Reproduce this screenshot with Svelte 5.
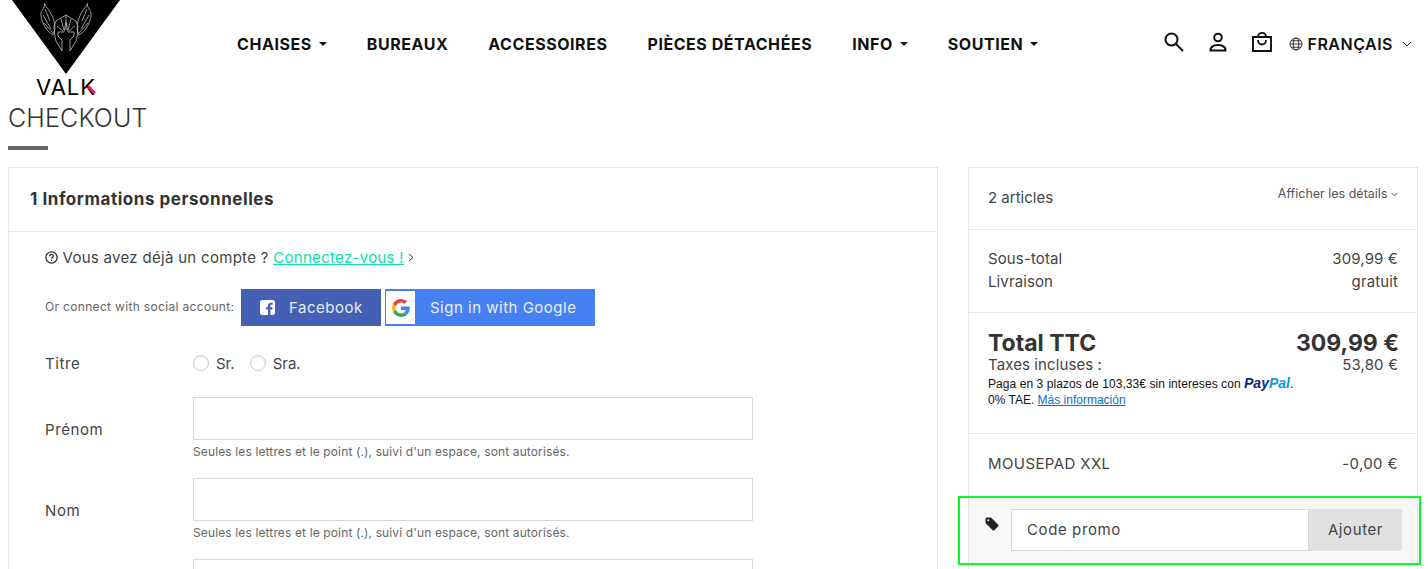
<script>
  const nav = [
    { label: 'CHAISES', caret: true },
    { label: 'BUREAUX' },
    { label: 'ACCESSOIRES' },
    { label: 'PIÈCES DÉTACHÉES' },
    { label: 'INFO', caret: true },
    { label: 'SOUTIEN', caret: true }
  ]
</script>

<div class="page">
  <header>
    <div class="logo">
      <svg width="108" height="74" viewBox="0 0 108 74">
        <path d="M0 0H108L54 74Z" fill="#000" />
        <g fill="none" stroke="#bdbdbd" stroke-width="0.8">
          <!-- wings -->
          <path d="M32.500 3.500C33.500 7 30 9 29 13C28.500 17 30 20 31 23C33 28 36 32 41 35L43 29C43 22 41 17 38 12C36.500 9 34 7 32.500 3.500Z" />
          <path d="M33 9L38 21M31 15L39 29M32 23L41 33" />
          <path d="M75.500 3.500C74.500 7 78 9 79 13C79.500 17 78 20 77 23C75 28 72 32 67 35L65 29C65 22 67 17 70 12C71.500 9 74 7 75.500 3.500Z" />
          <path d="M75 9L70 21M77 15L69 29M76 23L67 33" />
          <!-- helmet -->
          <path d="M54 15L44 21L42 26L43 37L44 41L50 51V40L46 36V32H52L54 22L56 32H62V36L58 40V51L64 41L65 37L66 26L64 21Z" />
          <path d="M45 26L51 31M63 26L57 31M49 19L52 30M59 19L56 30M54 15V30" />
        </g>
      </svg>
      <div class="brand">VAL<span class="k">K</span></div>
    </div>

    <nav>
      {#each nav as item}
        <a href="#top">{item.label}{#if item.caret}<i class="caret"></i>{/if}</a>
      {/each}
    </nav>

    <div class="tools">
      <svg class="tool" width="24" height="24" viewBox="0 0 24 24" fill="none" stroke="#111" stroke-width="2">
        <circle cx="9.500" cy="9.500" r="6" />
        <path d="M14 14L21 21" />
      </svg>
      <svg class="tool" width="24" height="24" viewBox="0 0 24 24" fill="none" stroke="#111" stroke-width="2">
        <circle cx="12" cy="7.500" r="3.800" />
        <path d="M4.500 20.500C4.500 16.500 8 15 12 15S19.500 16.500 19.500 20.500Z" />
      </svg>
      <svg class="tool" width="24" height="24" viewBox="0 0 24 24" fill="none" stroke="#111" stroke-width="1.900">
        <path d="M3 7H21V21H3Z" />
        <path d="M8 7C8 1.500 16 1.500 16 7M8 10C8 16 16 16 16 10" />
      </svg>
      <div class="lang">
        <svg width="14" height="14" viewBox="0 0 14 14" fill="none" stroke="#222" stroke-width="0.9">
          <circle cx="7" cy="7" r="6" />
          <ellipse cx="7" cy="7" rx="2.800" ry="6" />
          <path d="M1 7H13M2 3.800H12M2 10.200H12" />
        </svg>
        <span>FRANÇAIS</span>
        <svg class="chev" width="10" height="6" viewBox="0 0 10 6" fill="none" stroke="#222" stroke-width="1">
          <path d="M1 1L5 5L9 1" />
        </svg>
      </div>
    </div>
  </header>

  <h1>CHECKOUT</h1>
  <div class="rule"></div>

  <div class="columns">
    <section class="card left">
      <h2>1 Informations personnelles</h2>
      <div class="form">
        <p class="login">
          <svg width="13" height="13" viewBox="0 0 13 13" fill="none" stroke="#333" stroke-width="1.300">
            <circle cx="6.500" cy="6.500" r="5.600" />
            <path d="M4.600 5.200C4.600 2.800 8.400 2.800 8.400 5C8.400 6.400 6.500 6.300 6.500 7.800M6.500 8.800V10" />
          </svg>
          Vous avez déjà un compte ? <a href="#top">Connectez-vous !</a>
          <svg class="next" width="6" height="9" viewBox="0 0 6 9" fill="none" stroke="#333" stroke-width="1">
            <path d="M1 1L5 4.500L1 8" />
          </svg>
        </p>

        <div class="social">
          <span class="social-label">Or connect with social account:</span>
          <button class="fb">
            <svg width="15" height="15" viewBox="0 0 15 15">
              <path fill="#fff" fill-rule="evenodd" d="M2.500 0H12.500A2.500 2.500 0 0 1 15 2.500V12.500A2.500 2.500 0 0 1 12.500 15H10.400V9.400H12.300L12.600 7.200H10.400V5.900C10.400 5.200 10.700 4.800 11.500 4.800H12.700V2.800C12.400 2.800 11.700 2.700 11 2.700C9.200 2.700 8 3.800 8 5.700V7.200H6V9.400H8V15H2.500A2.500 2.500 0 0 1 0 12.500V2.500A2.500 2.500 0 0 1 2.500 0Z" />
            </svg>
            Facebook
          </button>
          <button class="google">
            <span class="g-box">
              <svg width="18" height="18" viewBox="0 0 48 48">
                <path fill="#EA4335" d="M24 9.500c3.500 0 6.700 1.200 9.200 3.600l6.900-6.900C35.900 2.400 30.500 0 24 0 14.600 0 6.500 5.400 2.600 13.200l8 6.200C12.500 13.700 17.800 9.500 24 9.500z" />
                <path fill="#4285F4" d="M47 24.500c0-1.600-.1-3.100-.4-4.500H24v9h12.900c-.6 3-2.200 5.500-4.700 7.200l7.700 6C44.400 38.100 47 31.900 47 24.500z" />
                <path fill="#FBBC05" d="M10.500 28.600c-.5-1.400-.8-3-.8-4.600s.3-3.200.8-4.600l-8-6.200C.9 16.500 0 20.100 0 24s.9 7.500 2.600 10.800l7.900-6.200z" />
                <path fill="#34A853" d="M24 48c6.500 0 11.900-2.100 15.900-5.800l-7.700-6c-2.200 1.500-4.900 2.300-8.200 2.300-6.200 0-11.500-4.200-13.400-9.900l-8 6.200C6.500 42.600 14.600 48 24 48z" />
              </svg>
            </span>
            <span class="g-label">Sign in with Google</span>
          </button>
        </div>

        <div class="row title-row">
          <span class="field-label">Titre</span>
          <div class="radios">
            <i class="radio"></i><span>Sr.</span>
            <i class="radio"></i><span>Sra.</span>
          </div>
        </div>

        <div class="row">
          <span class="field-label">Prénom</span>
          <div class="field">
            <input type="text" />
            <small>Seules les lettres et le point (.), suivi d'un espace, sont autorisés.</small>
          </div>
        </div>

        <div class="row">
          <span class="field-label">Nom</span>
          <div class="field">
            <input type="text" />
            <small>Seules les lettres et le point (.), suivi d'un espace, sont autorisés.</small>
          </div>
        </div>

        <div class="row">
          <span class="field-label"></span>
          <div class="field"><input type="text" /></div>
        </div>
      </div>
    </section>

    <aside class="card right">
      <div class="block count">
        <span>2 articles</span>
        <span class="details">Afficher les détails
          <svg width="7" height="5" viewBox="0 0 7 5" fill="none" stroke="#555" stroke-width="1"><path d="M.5.8L3.500 4L6.500.8" /></svg>
        </span>
      </div>

      <div class="block subtotals">
        <div class="line"><span>Sous-total</span><span>309,99 €</span></div>
        <div class="line"><span>Livraison</span><span>gratuit</span></div>
      </div>

      <div class="block total">
        <div class="line big"><span>Total TTC</span><span>309,99 €</span></div>
        <div class="line taxes"><span>Taxes incluses :</span><span>53,80 €</span></div>
        <p class="paypal">
          <span class="wide">Paga en 3 plazos de 103,33€ sin intereses con</span> <b class="pp"><span>Pay</span><span>Pal</span></b>.<br />
          0% TAE. <a href="#top">Más información</a>
        </p>
      </div>

      <div class="block voucher">
        <div class="line"><span>MOUSEPAD XXL</span><span>-0,00 €</span></div>
      </div>

      <div class="promo">
        <svg class="tag" width="14" height="14" viewBox="0 0 14 14">
          <path fill="#222" fill-rule="evenodd" d="M0.500 1.500L1.500.5H6L13.200 7.700C13.700 8.200 13.700 8.800 13.200 9.300L9.300 13.200C8.800 13.700 8.200 13.700 7.700 13.200L.5 6ZM3.300 2.300A1 1 0 1 0 3.300 4.300A1 1 0 1 0 3.300 2.300Z" />
        </svg>
        <div class="promo-input">Code promo</div>
        <button class="promo-btn">Ajouter</button>
        <div class="highlight"></div>
      </div>
    </aside>
  </div>
</div>

<style>
  :global(html), :global(body) {
    margin: 0;
    overflow: hidden;
    background: #fff;
  }

  .page {
    width: 1428px;
    height: 569px;
    overflow: hidden;
    font-family: "Inter", "Noto Sans", sans-serif;
    color: #444;
    box-sizing: border-box;
  }

  header {
    display: flex;
    height: 100px;
    padding-left: 12px;
    box-sizing: border-box;
  }

  .logo {
    width: 108px;
    display: flex;
    flex-direction: column;
    align-items: center;
  }

  .logo svg {
    display: block;
  }

  .brand {
    font-size: 22px;
    line-height: 22px;
    margin-top: 2px;
    font-weight: 400;
    color: #000;
    letter-spacing: 1px;
  }

  .k {
    position: relative;
    display: inline-block;
  }

  .k::after {
    content: '';
    position: absolute;
    right: 3px;
    bottom: 3px;
    width: 3px;
    height: 10px;
    background: #ec1274;
    transform: rotate(-40deg);
  }

  nav {
    display: flex;
    gap: 40px;
    margin-left: 117px;
    padding-top: 34px;
    height: 20px;
  }

  nav a {
    font-size: 16px;
    line-height: 20px;
    font-weight: 700;
    letter-spacing: 0.55px;
    color: #111;
    text-decoration: none;
    white-space: nowrap;
    display: flex;
    align-items: center;
  }

  .caret {
    display: block;
    width: 0;
    height: 0;
    margin-left: 7px;
    border: 4px solid transparent;
    border-top-color: #111;
    border-bottom-width: 0;
  }

  .tools {
    display: flex;
    align-items: flex-start;
    margin-left: auto;
    padding-top: 30px;
    padding-right: 16px;
    gap: 20px;
  }

  .tool {
    display: block;
  }

  .lang {
    display: flex;
    align-items: center;
    gap: 5px;
    height: 28px;
    margin-left: -5px;
    font-size: 16px;
    font-weight: 600;
    letter-spacing: 0.5px;
    color: #111;
  }

  .chev {
    margin-left: 4px;
  }

  h1 {
    margin: 0;
    padding-left: 8px;
    font-size: 25px;
    line-height: 36px;
    font-weight: 300;
    color: #333;
    letter-spacing: 0.15px;
  }

  .rule {
    width: 40px;
    height: 4px;
    margin: 10px 0 17px 8px;
    background: #666;
  }

  .columns {
    display: flex;
    gap: 30px;
    padding-left: 8px;
  }

  .card {
    border: 1px solid #e6e6e6;
    box-sizing: border-box;
  }

  .left {
    width: 930px;
  }

  .right {
    width: 450px;
  }

  h2 {
    margin: 0;
    height: 64px;
    padding-left: 21px;
    font-size: 17px;
    line-height: 63px;
    font-weight: 700;
    letter-spacing: 0.55px;
    color: #333;
    border-bottom: 1px solid #e6e6e6;
    box-sizing: border-box;
  }

  .form {
    padding-left: 36px;
  }

  .login {
    margin: 0 0 6px;
    height: 51px;
    font-size: 15px;
    line-height: 20px;
    letter-spacing: 0.3px;
    display: flex;
    align-items: center;
    white-space: pre;
  }

  .login a {
    color: #0be0a8;
  }

  .login .next {
    margin: 0 0 0 4px;
  }

  .social {
    display: flex;
    align-items: center;
    height: 37px;
  }

  .social-label {
    width: 196px;
    font-size: 12px;
    line-height: 14px;
    padding-bottom: 2px;
    letter-spacing: 0.33px;
    color: #666;
    white-space: nowrap;
  }

  button {
    font-family: inherit;
    border: 0;
    padding: 0;
    margin: 0;
  }

  .fb {
    width: 140px;
    height: 37px;
    background: #4460b5;
    color: #e8ecf8;
    font-size: 15px;
    letter-spacing: 0.5px;
    display: flex;
    align-items: center;
    gap: 14px;
    padding-left: 19px;
    box-sizing: border-box;
  }

  .google {
    width: 210px;
    height: 37px;
    margin-left: 4px;
    background: #4681f4;
    color: #e8effd;
    font-size: 15px;
    letter-spacing: 0.5px;
    display: flex;
    align-items: center;
    box-sizing: border-box;
  }

  .g-box {
    width: 29px;
    height: 33px;
    margin-left: 1px;
    background: #fff;
    display: flex;
    align-items: center;
    justify-content: center;
  }

  .g-label {
    margin-left: 15px;
  }

  .row {
    display: flex;
    align-items: center;
  }

  .title-row {
    height: 36px;
    margin-top: 19px;
    margin-bottom: 16px;
  }

  .field-label {
    width: 148px;
    font-size: 15px;
    letter-spacing: 0.6px;
    flex: none;
  }

  .radios {
    display: flex;
    align-items: center;
    font-size: 15px;
  }

  .radio {
    display: block;
    width: 14px;
    height: 14px;
    border: 1px solid #ccc;
    border-radius: 50%;
    margin-right: 7px;
    box-shadow: inset 0 1px 2px #eee;
  }

  .radios span {
    margin-right: 15px;
  }

  .field {
    width: 560px;
    height: 81px;
  }

  .field input {
    display: block;
    width: 100%;
    height: 43px;
    border: 1px solid #d6d6d6;
    background: #fff;
    box-sizing: border-box;
    padding: 0;
    margin: 0;
  }

  small {
    display: block;
    margin-top: 4px;
    font-size: 12px;
    letter-spacing: 0.13px;
    line-height: 16px;
    color: #666;
    white-space: nowrap;
  }

  .row:has(.field) .field-label {
    padding-bottom: 17px;
  }

  .block {
    padding: 0 19px;
    border-bottom: 1px solid #e6e6e6;
  }

  .line {
    display: flex;
    justify-content: space-between;
  }

  .count {
    height: 62px;
    display: flex;
    justify-content: space-between;
    font-size: 15px;
    padding-top: 21px;
    box-sizing: border-box;
    line-height: 18px;
  }

  .details {
    font-size: 12.500px;
    margin-top: -4px;
    color: #555;
  }

  .details svg {
    vertical-align: 1px;
  }

  .subtotals {
    height: 83px;
    padding-top: 17px;
    box-sizing: border-box;
    font-size: 15px;
    letter-spacing: 0.12px;
    line-height: 23px;
  }

  .total {
    height: 121px;
    padding-top: 16px;
    box-sizing: border-box;
  }

  .big {
    font-size: 23px;
    line-height: 28px;
    font-weight: 700;
    color: #333;
    margin-right: -1px;
  }

  .taxes {
    font-size: 15px;
    line-height: 17px;
    margin-top: -1px;
    letter-spacing: 0.1px;
  }

  .paypal {
    margin: 2px 0 0;
    font-family: "Liberation Sans", Arial, sans-serif;
    font-size: 12px;
    line-height: 16px;
    color: #111;
  }

  .wide {
    letter-spacing: 0.07px;
  }

  .paypal a {
    color: #0a6fc2;
  }

  .pp {
    font-size: 14px;
    font-style: italic;
    font-weight: 700;
    color: #0a2a8a;
  }

  .pp span + span {
    color: #0b9bdc;
  }

  .voucher {
    height: 64px;
    padding-top: 21px;
    box-sizing: border-box;
    font-size: 15px;
    letter-spacing: 0.4px;
    line-height: 18px;
    border-bottom: 0;
  }

  .promo {
    position: relative;
    display: flex;
    align-items: flex-start;
    height: 68px;
    padding: 11px 15px 0 16px;
    background: #f7f7f7;
    box-sizing: border-box;
  }

  .tag {
    margin-top: 8px;
    flex: none;
  }

  .promo-input {
    width: 298px;
    flex: none;
    height: 42px;
    margin-left: 12px;
    padding-left: 15px;
    background: #fff;
    border: 1px solid #d9d9d9;
    box-sizing: border-box;
    font-size: 15px;
    letter-spacing: 0.6px;
    line-height: 40px;
  }

  .promo-btn {
    width: 93px;
    height: 42px;
    padding-bottom: 2px;
    background: #e1e1e1;
    color: #444;
    font-size: 15px;
    letter-spacing: 0.6px;
  }

  .highlight {
    position: absolute;
    left: -11px;
    right: -4px;
    top: -2px;
    bottom: 1px;
    border: 2px solid #00ff2a;
  }
</style>
